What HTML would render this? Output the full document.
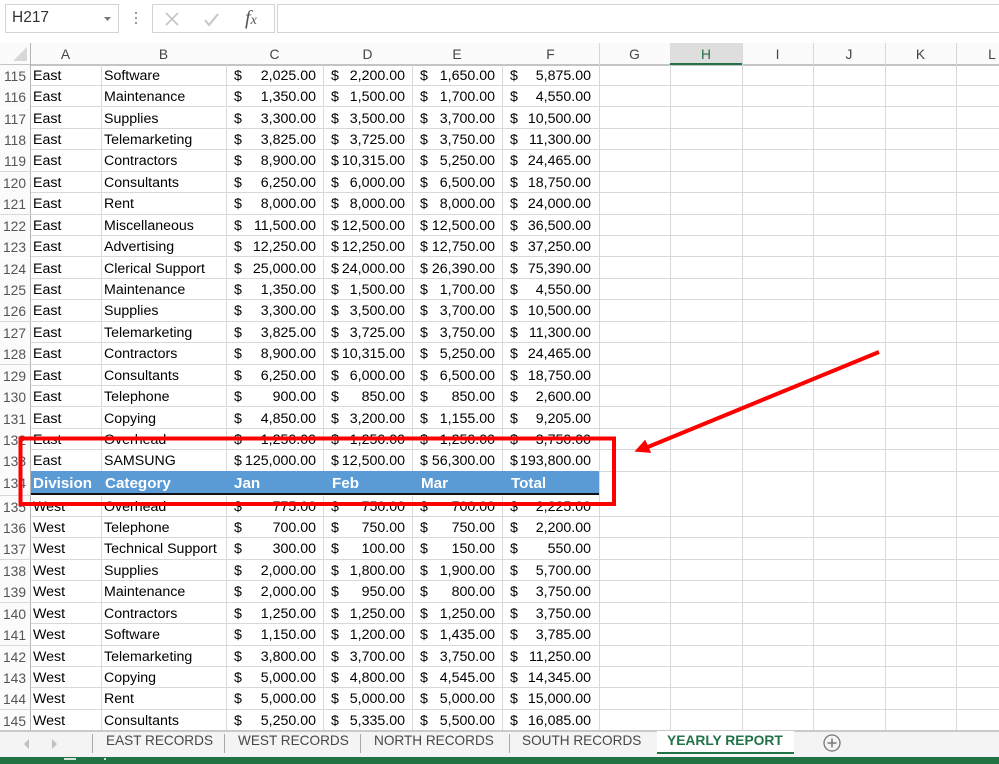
<!DOCTYPE html>
<html><head><meta charset="utf-8"><style>
html,body{margin:0;padding:0;background:#fff}
#p{position:relative;width:999px;height:764px;overflow:hidden;background:#fff;font-family:"Liberation Sans",sans-serif;color:#000}
.a{position:absolute}
.r{position:absolute;left:0;width:999px;height:21.43px;border-bottom:1px solid #d8d8d8;box-sizing:border-box;display:grid;grid-template-columns:31px 71px 125px 97px 89px 90px 97px;font-size:14.2px;line-height:23.5px}
.r>*{display:block;box-sizing:border-box;font-style:normal;font-weight:normal;text-decoration:none;border-right:1px solid #d8d8d8;white-space:nowrap;height:21px;overflow:hidden}
.r>i{color:#555;text-align:right;padding-right:4px;border-right:1px solid #b4b4b4;background:#fbfbfb;font-size:13.8px}
.r>b{padding-left:2px}
.r>u{position:relative;padding-left:7px}
.r>u em{position:absolute;right:7px;top:0;font-style:normal}
.r>u:last-child em{right:8px}
.v{position:absolute;width:1px;top:43px;height:688px;background:#d8d8d8}
.h{position:absolute;top:44px;height:20px;line-height:22px;text-align:center;font-size:13.8px;color:#444}
.t{position:absolute;top:731px;font-size:13.6px;color:#474747;line-height:19px;white-space:nowrap}
.s{position:absolute;top:734px;width:1px;height:19px;background:#a9a9a9}
</style></head><body><div id="p">
<div class="a" style="left:5px;top:4px;width:112px;height:27px;border:1px solid #d4d4d4"></div>
<div class="a" style="left:12px;top:9px;font-size:15.5px;line-height:18px;color:#333">H217</div>
<svg class="a" style="left:0;top:0" width="290" height="36"><path d="M104 17h7l-3.500 4z" fill="#777"/><path d="M135 12h2v2h-2zM135 17h2v2h-2zM135 22h2v2h-2z" fill="#999"/><path d="M166 13l12 12M178 13l-12 12" stroke="#c6c6c6" stroke-width="1.800" fill="none"/><path d="M205 20l4 5 9-11" stroke="#c6c6c6" stroke-width="2" fill="none"/><text x="245" y="24" font-family="Liberation Serif,serif" font-style="italic" font-size="20" fill="#555">f<tspan font-size="14">x</tspan></text></svg>
<div class="a" style="left:152px;top:4px;width:121px;height:27px;border:1px solid #d4d4d4"></div>
<div class="a" style="left:277px;top:4px;width:730px;height:27px;border:1px solid #d4d4d4"></div>

<div class="a" style="left:0;top:43px;width:999px;height:21px;background:#fbfbfb;border-bottom:2px solid #c4c4c4"></div>
<svg class="a" style="left:12px;top:47px" width="16" height="15"><path d="M15 0v14H1z" fill="#d8d8d8"/></svg>
<div class="v" style="left:30px;background:#b4b4b4"></div>
<div class="v" style="left:599px"></div><div class="v" style="left:670px"></div><div class="v" style="left:742px"></div><div class="v" style="left:813px"></div><div class="v" style="left:885px"></div><div class="v" style="left:956px"></div>
<div class="a" style="left:670px;top:43px;width:72px;height:20px;background:#dedede;border-bottom:2px solid #217346"></div>
<div class="h" style="left:30px;width:71px">A</div><div class="h" style="left:101px;width:125px">B</div><div class="h" style="left:226px;width:97px">C</div><div class="h" style="left:323px;width:89px">D</div><div class="h" style="left:412px;width:90px">E</div><div class="h" style="left:502px;width:97px">F</div><div class="h" style="left:599px;width:71px">G</div><div class="h" style="left:670px;width:72px;color:#217346">H</div><div class="h" style="left:742px;width:71px">I</div><div class="h" style="left:813px;width:72px">J</div><div class="h" style="left:885px;width:71px">K</div><div class="h" style="left:956px;width:72px">L</div>

<div class="r" style="top:64.6px"><i>115</i><b>East</b><b>Software</b><u>$<em>2,025.00</em></u><u>$<em>2,200.00</em></u><u>$<em>1,650.00</em></u><u>$<em>5,875.00</em></u></div>
<div class="r" style="top:86px"><i>116</i><b>East</b><b>Maintenance</b><u>$<em>1,350.00</em></u><u>$<em>1,500.00</em></u><u>$<em>1,700.00</em></u><u>$<em>4,550.00</em></u></div>
<div class="r" style="top:107.5px"><i>117</i><b>East</b><b>Supplies</b><u>$<em>3,300.00</em></u><u>$<em>3,500.00</em></u><u>$<em>3,700.00</em></u><u>$<em>10,500.00</em></u></div>
<div class="r" style="top:128.9px"><i>118</i><b>East</b><b>Telemarketing</b><u>$<em>3,825.00</em></u><u>$<em>3,725.00</em></u><u>$<em>3,750.00</em></u><u>$<em>11,300.00</em></u></div>
<div class="r" style="top:150.3px"><i>119</i><b>East</b><b>Contractors</b><u>$<em>8,900.00</em></u><u>$<em>10,315.00</em></u><u>$<em>5,250.00</em></u><u>$<em>24,465.00</em></u></div>
<div class="r" style="top:171.8px"><i>120</i><b>East</b><b>Consultants</b><u>$<em>6,250.00</em></u><u>$<em>6,000.00</em></u><u>$<em>6,500.00</em></u><u>$<em>18,750.00</em></u></div>
<div class="r" style="top:193.2px"><i>121</i><b>East</b><b>Rent</b><u>$<em>8,000.00</em></u><u>$<em>8,000.00</em></u><u>$<em>8,000.00</em></u><u>$<em>24,000.00</em></u></div>
<div class="r" style="top:214.6px"><i>122</i><b>East</b><b>Miscellaneous</b><u>$<em>11,500.00</em></u><u>$<em>12,500.00</em></u><u>$<em>12,500.00</em></u><u>$<em>36,500.00</em></u></div>
<div class="r" style="top:236px"><i>123</i><b>East</b><b>Advertising</b><u>$<em>12,250.00</em></u><u>$<em>12,250.00</em></u><u>$<em>12,750.00</em></u><u>$<em>37,250.00</em></u></div>
<div class="r" style="top:257.5px"><i>124</i><b>East</b><b>Clerical Support</b><u>$<em>25,000.00</em></u><u>$<em>24,000.00</em></u><u>$<em>26,390.00</em></u><u>$<em>75,390.00</em></u></div>
<div class="r" style="top:278.9px"><i>125</i><b>East</b><b>Maintenance</b><u>$<em>1,350.00</em></u><u>$<em>1,500.00</em></u><u>$<em>1,700.00</em></u><u>$<em>4,550.00</em></u></div>
<div class="r" style="top:300.3px"><i>126</i><b>East</b><b>Supplies</b><u>$<em>3,300.00</em></u><u>$<em>3,500.00</em></u><u>$<em>3,700.00</em></u><u>$<em>10,500.00</em></u></div>
<div class="r" style="top:321.8px"><i>127</i><b>East</b><b>Telemarketing</b><u>$<em>3,825.00</em></u><u>$<em>3,725.00</em></u><u>$<em>3,750.00</em></u><u>$<em>11,300.00</em></u></div>
<div class="r" style="top:343.2px"><i>128</i><b>East</b><b>Contractors</b><u>$<em>8,900.00</em></u><u>$<em>10,315.00</em></u><u>$<em>5,250.00</em></u><u>$<em>24,465.00</em></u></div>
<div class="r" style="top:364.6px"><i>129</i><b>East</b><b>Consultants</b><u>$<em>6,250.00</em></u><u>$<em>6,000.00</em></u><u>$<em>6,500.00</em></u><u>$<em>18,750.00</em></u></div>
<div class="r" style="top:386px"><i>130</i><b>East</b><b>Telephone</b><u>$<em>900.00</em></u><u>$<em>850.00</em></u><u>$<em>850.00</em></u><u>$<em>2,600.00</em></u></div>
<div class="r" style="top:407.5px"><i>131</i><b>East</b><b>Copying</b><u>$<em>4,850.00</em></u><u>$<em>3,200.00</em></u><u>$<em>1,155.00</em></u><u>$<em>9,205.00</em></u></div>
<div class="r" style="top:428.9px"><i>132</i><b>East</b><b>Overhead</b><u>$<em>1,250.00</em></u><u>$<em>1,250.00</em></u><u>$<em>1,250.00</em></u><u>$<em>3,750.00</em></u></div>
<div class="r" style="top:450.3px"><i>133</i><b>East</b><b>SAMSUNG</b><u>$<em>125,000.00</em></u><u>$<em>12,500.00</em></u><u>$<em>56,300.00</em></u><u>$<em>193,800.00</em></u></div>

<div class="a" style="left:0;top:471px;width:30px;height:24px;background:#fbfbfb;border-right:1px solid #b4b4b4;border-bottom:1px solid #d8d8d8;box-sizing:content-box;color:#555;font-size:13.8px;line-height:25px;text-align:right"><span style="padding-right:4px">134</span></div>
<div class="a" style="left:31px;top:471px;width:568px;height:22px;background:#5b9bd5;border-bottom:2px solid #111"></div>
<div class="a" style="left:31px;top:471px;width:568px;height:24px;color:#fff;font-weight:bold;font-size:15.2px;line-height:26px"><span class="a" style="left:2px">Division</span><span class="a" style="left:74px">Category</span><span class="a" style="left:203px">Jan</span><span class="a" style="left:301px">Feb</span><span class="a" style="left:390px">Mar</span><span class="a" style="left:480px">Total</span></div>

<div class="r" style="top:495.5px"><i>135</i><b>West</b><b>Overhead</b><u>$<em>775.00</em></u><u>$<em>750.00</em></u><u>$<em>700.00</em></u><u>$<em>2,225.00</em></u></div>
<div class="r" style="top:516.9px"><i>136</i><b>West</b><b>Telephone</b><u>$<em>700.00</em></u><u>$<em>750.00</em></u><u>$<em>750.00</em></u><u>$<em>2,200.00</em></u></div>
<div class="r" style="top:538.4px"><i>137</i><b>West</b><b>Technical Support</b><u>$<em>300.00</em></u><u>$<em>100.00</em></u><u>$<em>150.00</em></u><u>$<em>550.00</em></u></div>
<div class="r" style="top:559.8px"><i>138</i><b>West</b><b>Supplies</b><u>$<em>2,000.00</em></u><u>$<em>1,800.00</em></u><u>$<em>1,900.00</em></u><u>$<em>5,700.00</em></u></div>
<div class="r" style="top:581.2px"><i>139</i><b>West</b><b>Maintenance</b><u>$<em>2,000.00</em></u><u>$<em>950.00</em></u><u>$<em>800.00</em></u><u>$<em>3,750.00</em></u></div>
<div class="r" style="top:602.7px"><i>140</i><b>West</b><b>Contractors</b><u>$<em>1,250.00</em></u><u>$<em>1,250.00</em></u><u>$<em>1,250.00</em></u><u>$<em>3,750.00</em></u></div>
<div class="r" style="top:624.1px"><i>141</i><b>West</b><b>Software</b><u>$<em>1,150.00</em></u><u>$<em>1,200.00</em></u><u>$<em>1,435.00</em></u><u>$<em>3,785.00</em></u></div>
<div class="r" style="top:645.5px"><i>142</i><b>West</b><b>Telemarketing</b><u>$<em>3,800.00</em></u><u>$<em>3,700.00</em></u><u>$<em>3,750.00</em></u><u>$<em>11,250.00</em></u></div>
<div class="r" style="top:666.9px"><i>143</i><b>West</b><b>Copying</b><u>$<em>5,000.00</em></u><u>$<em>4,800.00</em></u><u>$<em>4,545.00</em></u><u>$<em>14,345.00</em></u></div>
<div class="r" style="top:688.4px"><i>144</i><b>West</b><b>Rent</b><u>$<em>5,000.00</em></u><u>$<em>5,000.00</em></u><u>$<em>5,000.00</em></u><u>$<em>15,000.00</em></u></div>
<div class="r" style="top:709.8px"><i>145</i><b>West</b><b>Consultants</b><u>$<em>5,250.00</em></u><u>$<em>5,335.00</em></u><u>$<em>5,500.00</em></u><u>$<em>16,085.00</em></u></div>

<div class="a" style="left:0;top:730px;width:999px;height:27px;background:#f4f4f4;border-top:2px solid #c9c9c9;box-sizing:border-box"></div>
<svg class="a" style="left:20px;top:738px" width="40" height="12"><path d="M9 1L4 6l5 5zM32 1l5 5-5 5z" fill="#c0c0c0"/></svg>
<div class="s" style="left:92px"></div><div class="s" style="left:224px"></div><div class="s" style="left:360px"></div><div class="s" style="left:509px"></div>
<div class="t" style="left:106px">EAST RECORDS</div><div class="t" style="left:238px">WEST RECORDS</div><div class="t" style="left:374px">NORTH RECORDS</div><div class="t" style="left:522px">SOUTH RECORDS</div>
<div class="a" style="left:657px;top:731px;width:137px;height:21px;background:#fff;border-bottom:2px solid #217346"></div>
<div class="t" style="left:667px;color:#217346;font-weight:bold;font-size:13.8px">YEARLY REPORT</div>
<svg class="a" style="left:822px;top:733px" width="20" height="20"><circle cx="10" cy="10" r="8" fill="none" stroke="#777" stroke-width="1.300"/><path d="M10 5.500v9M5.500 10h9" stroke="#777" stroke-width="1.500"/></svg>
<div class="a" style="left:0;top:757px;width:999px;height:7px;background:#217346"></div>
<div class="a" style="left:64px;top:758px;width:12px;height:2px;background:#cfe3d8"></div><div class="a" style="left:104px;top:758px;width:2px;height:2px;background:#cfe3d8"></div>

<svg class="a" style="left:0;top:0" width="999" height="764">
<rect x="20.500" y="438.500" width="593.500" height="65.500" fill="none" stroke="#ff0000" stroke-width="4"/>
<path d="M879 352L643 449" stroke="#ff0000" stroke-width="4" fill="none"/>
<path d="M636 451L645 441L650 452Z" fill="#ff0000" stroke="#ff0000" stroke-width="1.500"/>
</svg>
</div></body></html>
